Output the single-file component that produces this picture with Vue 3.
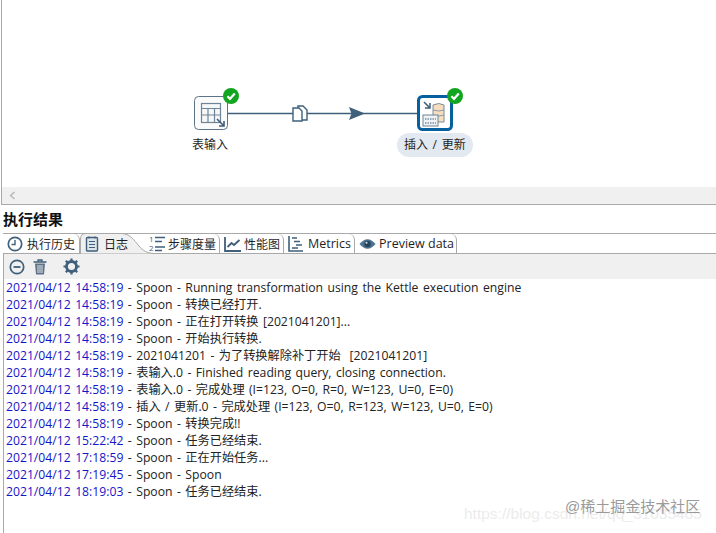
<script setup>
const logs = [
  ['2021/04/12 14:58:19', ' - Spoon - Running transformation using the Kettle execution engine'],
  ['2021/04/12 14:58:19', ' - Spoon - 转换已经打开.'],
  ['2021/04/12 14:58:19', ' - Spoon - 正在打开转换 [2021041201]...'],
  ['2021/04/12 14:58:19', ' - Spoon - 开始执行转换.'],
  ['2021/04/12 14:58:19', ' - 2021041201 - 为了转换解除补丁开始  [2021041201]'],
  ['2021/04/12 14:58:19', ' - 表输入.0 - Finished reading query, closing connection.'],
  ['2021/04/12 14:58:19', ' - 表输入.0 - 完成处理 (I=123, O=0, R=0, W=123, U=0, E=0)'],
  ['2021/04/12 14:58:19', ' - 插入 / 更新.0 - 完成处理 (I=123, O=0, R=123, W=123, U=0, E=0)'],
  ['2021/04/12 14:58:19', ' - Spoon - 转换完成!!'],
  ['2021/04/12 15:22:42', ' - Spoon - 任务已经结束.'],
  ['2021/04/12 17:18:59', ' - Spoon - 正在开始任务...'],
  ['2021/04/12 17:19:45', ' - Spoon - Spoon'],
  ['2021/04/12 18:19:03', ' - Spoon - 任务已经结束.'],
]
</script>

<template>
  <div class="page">
    <section class="canvas-pane">
      <div class="canvas">
        <svg class="hop" width="716" height="186" viewBox="0 0 716 186">
          <line x1="228" y1="113.5" x2="418" y2="113.5" stroke="#3f5f7a" stroke-width="1.3" />
          <path d="M349 107 L365 113.5 L349 120 L351.5 113.5 Z" fill="#3f5f7a" />
          <g fill="#fff" stroke="#3f5f7a" stroke-width="1.4">
            <path d="M298 106 h5 l4 4 v10 h-9 z" />
            <path d="M293 108 h6 l3 3 v10 h-9 z" />
          </g>
        </svg>

        <div class="node node-a">
          <svg width="34" height="34" viewBox="0 0 34 34">
            <rect x="0.5" y="0.5" width="33" height="33" rx="4" fill="#fbfbfb" stroke="#5d7488" />
            <g fill="none" stroke="#6f8597" stroke-width="1.2">
              <rect x="7.5" y="7.5" width="19" height="19" fill="#f6f7f8" />
              <path d="M7.5 12.5 H26.5 M7.5 19 H26.5 M14 12.5 V26.5 M20.5 12.5 V26.5" />
            </g>
            <path d="M23 23 L30 30 M30 25 V30 H25" fill="none" stroke="#3f5f7a" stroke-width="1.6" />
          </svg>
          <span class="check"><svg width="16" height="16" viewBox="0 0 16 16"><circle cx="8" cy="8" r="8" fill="#12a51f" /><path d="M4.4 8.2 L7 10.8 L11.8 5.6" fill="none" stroke="#fff" stroke-width="2.2" /></svg></span>
        </div>
        <div class="label label-a">表输入</div>

        <div class="node node-b">
          <svg width="36" height="36" viewBox="0 0 36 36">
            <rect x="1.5" y="1.5" width="33" height="33" rx="4" fill="#fff" stroke="#04609f" stroke-width="3" />
            <path d="M7 7 L13 13 M13 8 V13 H8" fill="none" stroke="#3f5f7a" stroke-width="1.5" />
            <path d="M16 10 q6 -3 11 0 v17 h-11 z" fill="#f6dfc0" stroke="#7a8a98" />
            <path d="M16 15 q6 2 11 0 M16 20 q6 2 11 0" fill="none" stroke="#8d98a2" />
            <rect x="6" y="20" width="15" height="11" fill="#eef2f5" stroke="#6e8598" />
            <path d="M8 24 H19 M8 28 H19" stroke="#3f5f7a" stroke-dasharray="1.5 1" />
          </svg>
          <span class="check"><svg width="16" height="16" viewBox="0 0 16 16"><circle cx="8" cy="8" r="8" fill="#12a51f" /><path d="M4.4 8.2 L7 10.8 L11.8 5.6" fill="none" stroke="#fff" stroke-width="2.2" /></svg></span>
        </div>
        <div class="label label-b">插入 / 更新</div>
      </div>
      <div class="scrollbar">
        <svg width="7" height="9" viewBox="0 0 7 9"><path d="M5.5 1 L1.5 4.5 L5.5 8" fill="none" stroke="#b5b5b5" stroke-width="1.4" /></svg>
      </div>
    </section>

    <h2 class="title">执行结果</h2>

    <section class="results">
      <nav class="tabs">
        <div class="tab tab-history">
          <svg width="16" height="16" viewBox="0 0 16 16"><circle cx="8" cy="8" r="6.7" fill="none" stroke="#3f5f7a" stroke-width="1.7" /><path d="M8 4 V8.5 H4.5" fill="none" stroke="#3f5f7a" stroke-width="1.4" /></svg>
          <span>执行历史</span>
        </div>
        <div class="tab tab-log">
          <svg class="tab-shape" width="74" height="21" viewBox="0 0 74 21"><path d="M0.5 21 V6 Q0.5 0.5 6 0.5 H41 C50 0.5 54 7 59 13 C63 18 67 20 74 20.5 V21 Z" fill="#f0f0f0" stroke="#a9a9a9" /></svg>
          <svg class="tab-icon" width="14" height="16" viewBox="0 0 14 16"><rect x="1.5" y="1.5" width="11" height="13.5" rx="1" fill="#dde5ec" stroke="#3f5f7a" stroke-width="1.4" /><path d="M4 5.5 H10 M4 8.5 H10 M4 11.5 H10 M4 0.5 V2.5 M10 0.5 V2.5" stroke="#3f5f7a" stroke-width="1.1" /></svg>
          <span>日志</span>
        </div>
        <div class="tab tab-steps">
          <svg width="18" height="17" viewBox="0 0 18 17"><path d="M7 2.5 H17 M7 6.5 H14 M7 12 H17 M7 15.5 H14" stroke="#3f5f7a" stroke-width="1.3" /><text x="1" y="7" class="mini">1</text><text x="1" y="16" class="mini">2</text></svg>
          <span>步骤度量</span>
        </div>
        <div class="tab tab-perf">
          <svg width="17" height="16" viewBox="0 0 17 16"><path d="M1 1 V15 H17" fill="none" stroke="#3f5f7a" stroke-width="1.8" /><path d="M3.5 11 L7.5 7 L10 9 L15.5 4" fill="none" stroke="#3f5f7a" stroke-width="1.8" /></svg>
          <span>性能图</span>
        </div>
        <div class="tab tab-metrics">
          <svg width="16" height="17" viewBox="0 0 16 17"><path d="M1 1 V16 H15" fill="none" stroke="#3f5f7a" stroke-width="1.6" /><path d="M4 3 H9 M6 6.5 H12 M8 10 H14 M4 13 H10" stroke="#3f5f7a" stroke-width="1.6" /></svg>
          <span>Metrics</span>
        </div>
        <div class="tab tab-preview">
          <svg width="17" height="12" viewBox="0 0 17 12"><path d="M0.5 6 Q8.5 -3.5 16.5 6 Q8.5 15.5 0.5 6 Z" fill="#4d7390" /><circle cx="8.5" cy="6" r="3.2" fill="#24445e" /><circle cx="7.5" cy="4.8" r="1" fill="#dfe7ee" /></svg>
          <span>Preview data</span>
        </div>
      </nav>

      <div class="toolbar">
        <svg width="16" height="16" viewBox="0 0 16 16"><circle cx="8" cy="8" r="6.7" fill="none" stroke="#3f5f7a" stroke-width="1.7" /><path d="M4.5 8 H11.5" stroke="#3f5f7a" stroke-width="1.8" /></svg>
        <svg class="tool-trash" width="14" height="16" viewBox="0 0 14 16"><path d="M0.5 3 H13.5 M5 3 V1 H9 V3" fill="none" stroke="#3f5f7a" stroke-width="1.3" /><path d="M2 4.5 H12 L11 15.5 H3 Z" fill="#5d7488" /><path d="M5 6 V14 M7 6 V14 M9 6 V14" stroke="#f0f0f0" stroke-width="0.9" /></svg>
        <svg class="tool-gear" width="17" height="17" viewBox="0 0 17 17"><circle cx="8.5" cy="8.5" r="5" fill="none" stroke="#3f5f7a" stroke-width="2.8" /><path d="M8.5 0.5 V3 M8.5 14 V16.5 M0.5 8.5 H3 M14 8.5 H16.5 M2.8 2.8 L4.6 4.6 M12.4 12.4 L14.2 14.2 M14.2 2.8 L12.4 4.6 M4.6 12.4 L2.8 14.2" stroke="#3f5f7a" stroke-width="2.2" /></svg>
      </div>

      <div class="log">
        <div v-for="(row, i) in logs" :key="i" class="log-row"><span class="stamp">{{ row[0] }}</span>{{ row[1] }}</div>
      </div>
    </section>

    <div class="wm wm-back">https://blog.csdn.net/qq_31035465</div>
    <div class="wm wm-front">@稀土掘金技术社区</div>
  </div>
</template>

<style>
html, body { margin: 0; background: #fff; }
</style>

<style scoped>
.page {
  position: relative;
  width: 716px;
  height: 533px;
  overflow: hidden;
  background: #fff;
  font-family: "Open Sans", "Noto Sans CJK SC", sans-serif;
  color: #1f1f1f;
}
.canvas-pane {
  height: 204px;
  margin-left: 1px;
  border-left: 1px solid #a9a9a9;
  border-bottom: 1px solid #a9a9a9;
  display: flex;
  flex-direction: column;
}
.canvas { position: relative; height: 187px; }
.hop { position: absolute; left: -2px; top: 0; }
.node { position: absolute; }
.node svg { display: block; }
.node-a { left: 192px; top: 96px; width: 34px; height: 34px; }
.node-b { left: 415px; top: 95px; width: 36px; height: 36px; }
.check { position: absolute; right: -11px; top: -8px; }
.node-b .check { right: -10px; top: -7px; }
.label { position: absolute; font-size: 12px; line-height: 17px; white-space: nowrap; }
.label-a { left: 190px; top: 136px; }
.label-b {
  left: 395px;
  top: 133px;
  padding: 3px 7px 4px;
  border-radius: 12px;
  background: #e3e9f0;
  word-spacing: 1.5px;
}
.scrollbar {
  height: 17px;
  background: #f0f0f0;
  display: flex;
  align-items: center;
  padding-left: 7px;
}
.title {
  margin: 4px 0 0 3px;
  height: 24px;
  font-size: 15px;
  line-height: 20px;
  font-weight: 700;
  color: #111;
}
.results {
  margin-left: 3px;
  border-left: 1px solid #a9a9a9;
  height: 300px;
}
.tabs {
  height: 19px;
  display: flex;
  align-items: center;
  border-top: 1px solid #a9a9a9;
  border-bottom: 1px solid #a9a9a9;
  background: #fff;
  margin-left: -1px;
}
.tab {
  box-sizing: border-box;
  height: 19px;
  display: flex;
  align-items: center;
  gap: 4px;
  font-size: 12px;
  white-space: nowrap;
  border-right: 1px solid #a9a9a9;
  border-top-right-radius: 6px;
  position: relative;
}
.tab-history { width: 77px; padding-left: 4px; }
.tab-log { width: 68px; padding-left: 5px; gap: 5px; border-right: 0; border-radius: 0; }
.tab-shape { position: absolute; left: 0; top: -1px; }
.tab-log .tab-icon, .tab-log span { position: relative; }
.tab-steps { width: 72px; gap: 2px; }
.tab-perf { width: 64px; padding-left: 4px; gap: 3px; }
.tab-metrics { width: 71px; padding-left: 4px; font-size: 12.5px; }
.tab-preview { width: 102px; padding-left: 4px; gap: 3px; font-size: 12.5px; }
.mini { font-size: 8px; fill: #3f5f7a; }
.toolbar {
  height: 25px;
  background: #f0f0f0;
  display: flex;
  align-items: center;
  padding-left: 5px;
  gap: 8px;
}
.tool-gear { margin-left: 8px; }
.log { padding: 0 0 0 2px; }
.log-row {
  font-size: 12.2px;
  word-spacing: 1.3px;
  line-height: 17px;
  white-space: pre;
  color: #222;
}
.stamp { color: #1515c8; }
.wm { position: absolute; white-space: nowrap; font-family: "Liberation Sans", sans-serif; }
.wm-back { left: 464px; top: 505px; font-size: 15.5px; color: #ececec; }
.wm-front { left: 565px; top: 495px; font-size: 15px; color: #9a9a9a; font-family: "Liberation Sans", "Noto Sans CJK SC", sans-serif; }
</style>
